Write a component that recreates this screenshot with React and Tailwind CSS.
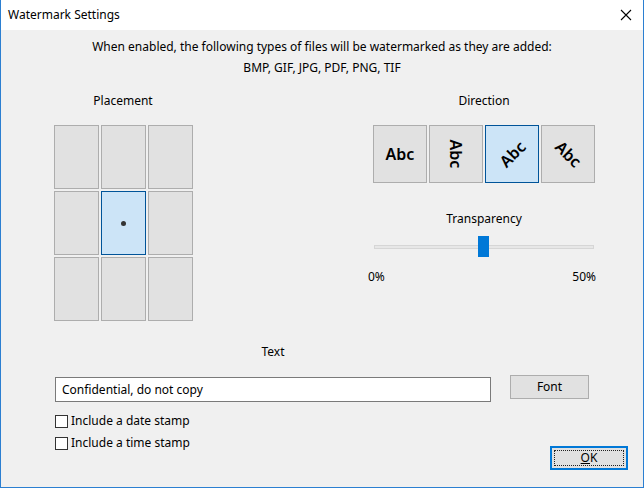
import React, { useState } from "react";

const font = { fontFamily: '"Segoe UI", "Noto Sans", "Open Sans", sans-serif' };

const Abc = ({ rotate }) => (
  <span className={`inline-block text-[16px] font-semibold text-black ${rotate}`}>Abc</span>
);

const directions = [
  { id: 0, rotate: "" },
  { id: 1, rotate: "rotate-90" },
  { id: 2, rotate: "-rotate-45" },
  { id: 3, rotate: "rotate-45" },
];

export default function App() {
  const [cell, setCell] = useState(4);
  const [dir, setDir] = useState(2);
  const [text, setText] = useState("Confidential, do not copy");
  const [dateStamp, setDateStamp] = useState(false);
  const [timeStamp, setTimeStamp] = useState(false);

  return (
    <div className="w-[644px] h-[488px] flex flex-col bg-[#f0f0f0] border border-t-0 border-[#2b7fd1] text-[12px] text-black overflow-hidden" style={font}>
      {/* title bar */}
      <div className="h-[30px] bg-white flex items-center justify-between pl-[7px] pr-[8px] shrink-0">
        <span className="text-[12px]">Watermark Settings</span>
        <svg width="12" height="12" viewBox="0 0 12 12" className="mr-[3px]">
          <path d="M1 1 L11 11 M11 1 L1 11" stroke="#000" strokeWidth="1.1" />
        </svg>
      </div>

      <div className="flex flex-col items-center pt-[9px]">
        <div className="leading-[16px]">When enabled, the following types of files will be watermarked as they are added:</div>
        <div className="leading-[16px] mt-[5px]">BMP, GIF, JPG, PDF, PNG, TIF</div>
      </div>

      <div className="flex mt-[17px] pl-[52px] pr-[48px] justify-between">
        {/* placement */}
        <div className="flex flex-col items-center w-[140px]">
          <div className="leading-[16px]">Placement</div>
          <div className="grid grid-cols-[45px_45px_45px] gap-x-[2px] gap-y-[2px] mt-[16px]">
            {Array.from({ length: 9 }).map((_, i) => (
              <button
                key={i}
                onClick={() => setCell(i)}
                className={`h-[64px] flex items-center justify-center border ${
                  cell === i ? "bg-[#cce4f7] border-[#005499]" : "bg-[#e1e1e1] border-[#adadad]"
                }`}
              >
                {cell === i && <span className="w-[5px] h-[5px] rounded-full bg-[#333]" />}
              </button>
            ))}
          </div>
        </div>

        {/* direction */}
        <div className="flex flex-col items-center w-[222px]">
          <div className="leading-[16px]">Direction</div>
          <div className="flex gap-[2px] mt-[16px]">
            {directions.map((d) => (
              <button
                key={d.id}
                onClick={() => setDir(d.id)}
                className={`w-[54px] h-[58px] flex items-center justify-center border ${
                  dir === d.id ? "bg-[#cce4f7] border-[#005499]" : "bg-[#e1e1e1] border-[#adadad]"
                }`}
              >
                <Abc rotate={d.rotate} />
              </button>
            ))}
          </div>
          <div className="leading-[16px] mt-[28px]">Transparency</div>
          <div className="relative w-[220px] h-[22px] mt-[9px]">
            <div className="absolute left-0 right-0 top-[9px] h-[4px] bg-[#e7e7e7] border border-[#d6d6d6]" />
            <div className="absolute left-[104px] top-0 w-[11px] h-[21px] bg-[#0078d7]" />
          </div>
          <div className="w-[224px] flex justify-between mt-[11px] leading-[16px]">
            <span className="-ml-[4px]">0%</span>
            <span>50%</span>
          </div>
        </div>
      </div>

      {/* text */}
      <div className="flex flex-col mt-[23px] pl-[54px]">
        <div className="w-[436px] text-center leading-[16px]">Text</div>
        <div className="flex items-start mt-[17px]">
          <input
            value={text}
            onChange={(e) => setText(e.target.value)}
            className="w-[436px] h-[25px] bg-white border border-[#7a7a7a] px-[6px] text-[12px] outline-none"
            style={font}
          />
          <button className="ml-[19px] -mt-[2px] w-[79px] h-[24px] bg-[#e1e1e1] border border-[#adadad] text-[12px]">
            Font
          </button>
        </div>
        <label className="flex items-center mt-[12px] h-[14px]">
          <input type="checkbox" checked={dateStamp} onChange={(e) => setDateStamp(e.target.checked)} className="appearance-none w-[13px] h-[13px] bg-white border border-[#333]" />
          <span className="ml-[3px]">Include a date stamp</span>
        </label>
        <label className="flex items-center mt-[8px] h-[14px]">
          <input type="checkbox" checked={timeStamp} onChange={(e) => setTimeStamp(e.target.checked)} className="appearance-none w-[13px] h-[13px] bg-white border border-[#333]" />
          <span className="ml-[3px]">Include a time stamp</span>
        </label>
      </div>

      <div className="flex justify-end pr-[15px] -mt-[4px]">
        <button className="w-[78px] h-[24px] bg-[#e1e1e1] border-2 border-[#0078d7] flex items-center justify-center">
          <span className="border border-dotted border-[#222] w-[70px] h-[16px] flex items-center justify-center leading-[14px]">
            <span className="underline">O</span>K
          </span>
        </button>
      </div>
    </div>
  );
}
